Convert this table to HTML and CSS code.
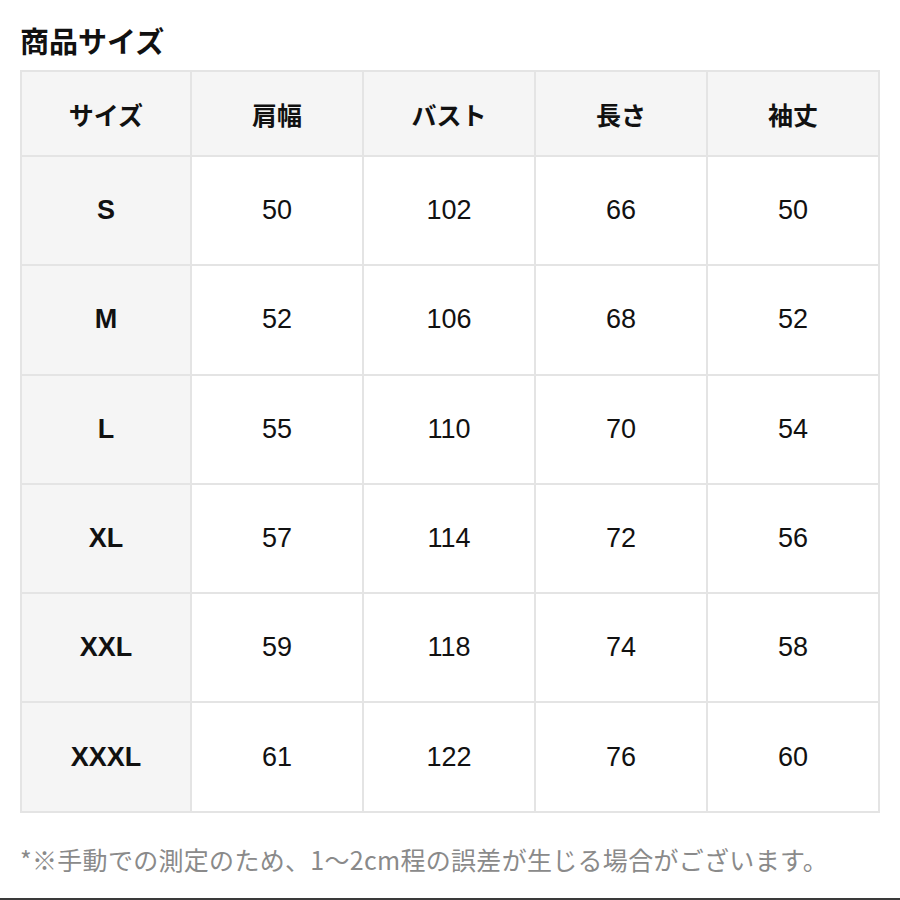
FILE: index.html
```html
<!DOCTYPE html>
<html lang="ja">
<head>
<meta charset="utf-8">
<link rel="stylesheet" href="styles.css">
</head>
<body>
<div class="page">
  <h1 class="title">商品サイズ</h1>
  <table class="size-table">
    <colgroup>
      <col class="col-size">
      <col><col><col><col>
    </colgroup>
    <thead>
      <tr><th>サイズ</th><th>肩幅</th><th>バスト</th><th>長さ</th><th>袖丈</th></tr>
    </thead>
    <tbody>
      <tr><th>S</th><td>50</td><td>102</td><td>66</td><td>50</td></tr>
      <tr><th>M</th><td>52</td><td>106</td><td>68</td><td>52</td></tr>
      <tr><th>L</th><td>55</td><td>110</td><td>70</td><td>54</td></tr>
      <tr><th>XL</th><td>57</td><td>114</td><td>72</td><td>56</td></tr>
      <tr><th>XXL</th><td>59</td><td>118</td><td>74</td><td>58</td></tr>
      <tr><th>XXXL</th><td>61</td><td>122</td><td>76</td><td>60</td></tr>
    </tbody>
  </table>
  <p class="note">*※手動での測定のため、1〜2cm程の誤差が生じる場合がございます。</p>
</div>
</body>
</html>
```

FILE: styles.css
```css
html, body {
  margin: 0;
  padding: 0;
  background: #ffffff;
}
.page {
  box-sizing: border-box;
  height: 900px;
  padding: 0 20px;
  border-bottom: 2px solid #3a3a3a;
  font-family: "Noto Sans CJK JP", "Noto Sans", sans-serif;
  color: #111;
}
.title {
  margin: 0 0 13px;
  padding-top: 23px;
  font-size: 29px;
  line-height: 34px;
  font-weight: 700;
  color: #111;
}
.size-table {
  width: 860px;
  table-layout: fixed;
  border-collapse: collapse;
  border: 2px solid #e4e4e4;
}
.col-size {
  width: 170px;
}
.size-table th,
.size-table td {
  border: 2px solid #e4e4e4;
  text-align: center;
  vertical-align: middle;
  padding: 0;
}
.size-table thead th {
  height: 83px;
  background: #f5f5f5;
  font-size: 25px;
  font-weight: 700;
}
.size-table tbody th {
  height: 107.3px;
  background: #f5f5f5;
  font-family: "Liberation Sans", Arial, sans-serif;
  font-size: 27px;
  font-weight: 700;
}
.size-table tbody td {
  height: 107.3px;
  background: #ffffff;
  font-family: "Liberation Sans", Arial, sans-serif;
  font-size: 27px;
  font-weight: 400;
}
.note {
  margin: 29px 0 0;
  font-size: 25px;
  line-height: 34px;
  letter-spacing: 0.3px;
  color: #8a8a8a;
}
```
